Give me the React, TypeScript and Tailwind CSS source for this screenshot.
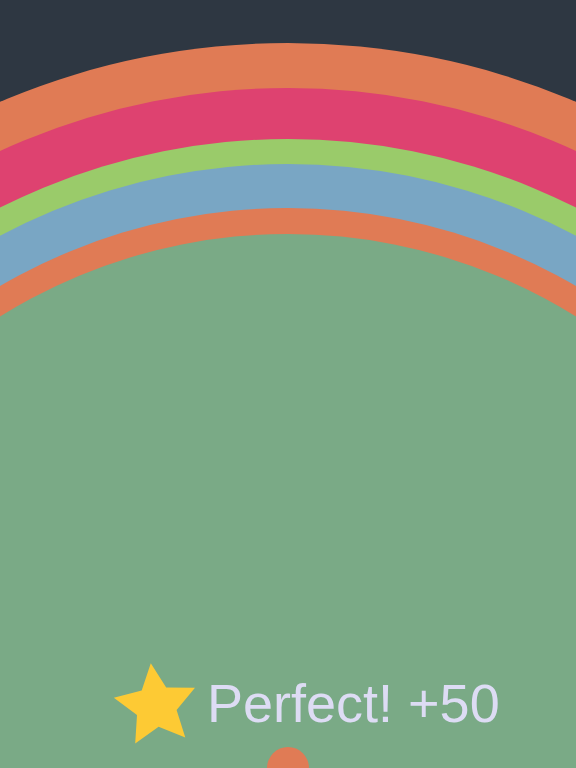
import React from 'react';

const rings = [
  { r: 735, color: '#e07b55' },
  { r: 690, color: '#de4270' },
  { r: 639, color: '#9acb6a' },
  { r: 614, color: '#79a6c4' },
  { r: 570, color: '#e07b55' },
  { r: 544, color: '#7aaa86' },
];

const starPoints = (cx: number, cy: number, outer: number, inner: number, rot: number) => {
  const pts: string[] = [];
  for (let i = 0; i < 10; i++) {
    const rad = i % 2 === 0 ? outer : inner;
    const a = ((-90 + i * 36 + rot) * Math.PI) / 180;
    pts.push(`${(cx + rad * Math.cos(a)).toFixed(1)},${(cy + rad * Math.sin(a)).toFixed(1)}`);
  }
  return pts.join(' ');
};

export default function App() {
  return (
    <div className="relative w-[576px] h-[768px] overflow-hidden bg-[#2e3742]">
      {/* rainbow track */}
      <svg className="absolute inset-0" width="576" height="768" viewBox="0 0 576 768">
        {rings.map((ring, i) => (
          <circle key={i} cx="288" cy="778" r={ring.r} fill={ring.color} />
        ))}
        <rect x="0" y="560" width="576" height="208" fill="#7aaa86" />
        <circle cx="288" cy="768" r="21" fill="#e07b55" />
      </svg>

      {/* score popup */}
      <div className="absolute left-[113px] top-[660px] flex items-center gap-[8px]">
        <svg width="86" height="86" viewBox="0 0 86 86" className="shrink-0">
          <polygon points={starPoints(43, 46, 43, 21, -7)} fill="#fdca34" />
        </svg>
        <span
          className="text-[54px] leading-none text-[#dddcf4] whitespace-nowrap"
          style={{ fontFamily: '"Liberation Sans", Arial, sans-serif' }}
        >
          Perfect! +50
        </span>
      </div>
    </div>
  );
}
